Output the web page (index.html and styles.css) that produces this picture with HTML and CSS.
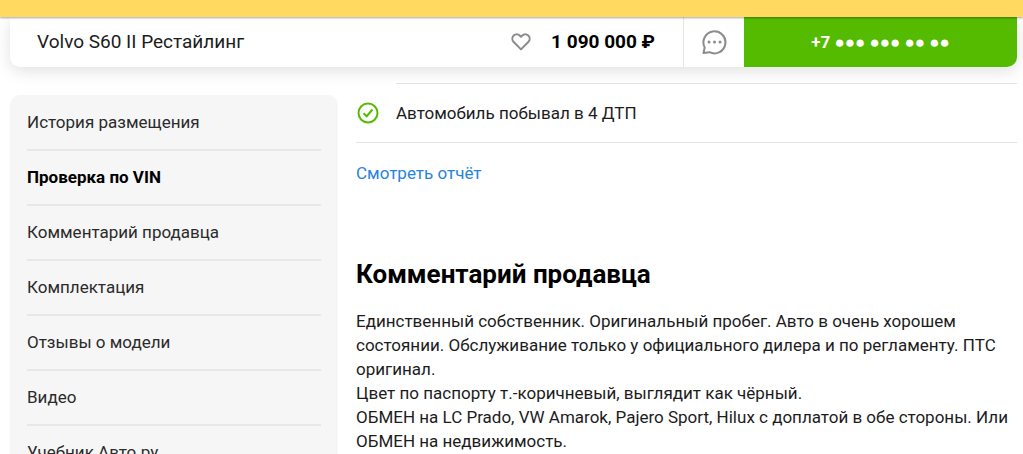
FILE: index.html
```
<!DOCTYPE html>
<html lang="ru">
<head>
  <meta charset="UTF-8">
  <title>Volvo S60 II Рестайлинг</title>
  <link rel="stylesheet" href="styles.css">
</head>
<body>
  <div class="top-strip"></div>

  <header class="sticky-bar">
    <div class="car-name">Volvo S60 II Рестайлинг</div>
    <button class="icon-btn like-btn" type="button" aria-label="В избранное">
      <svg width="20" height="18" viewBox="0 0 20 18" fill="none" stroke="#8c8c8c" stroke-width="2" stroke-linejoin="round">
        <path d="M10 16.400 2.700 9C.9 7.100.9 4.300 2.700 2.500 4.400.8 7 .8 8.700 2.500L10 3.800l1.300-1.300c1.700-1.700 4.300-1.700 6 0 1.800 1.800 1.800 4.600 0 6.500z"/>
      </svg>
    </button>
    <div class="price">1 090 000 ₽</div>
    <button class="icon-btn chat-btn" type="button" aria-label="Написать">
      <svg width="26" height="26" viewBox="0 0 26 26" fill="none" stroke="#8c8c8c" stroke-width="2" stroke-linejoin="round">
        <path d="M2.500 24l1.200-5.500A11 11 0 1 1 8.500 23.200z"/>
        <g fill="#8c8c8c" stroke="none">
          <circle cx="8" cy="13" r="1.500"/>
          <circle cx="13.500" cy="13" r="1.500"/>
          <circle cx="19" cy="13" r="1.500"/>
        </g>
      </svg>
    </button>
    <button class="phone-btn" type="button">+7 ●●● ●●● ●● ●●</button>
  </header>

  <div class="page">
    <nav class="side-menu">
      <ul>
        <li><a href="#history">История размещения</a></li>
        <li><a class="active" href="#vin">Проверка по VIN</a></li>
        <li><a href="#comment">Комментарий продавца</a></li>
        <li><a href="#options">Комплектация</a></li>
        <li><a href="#reviews">Отзывы о модели</a></li>
        <li><a href="#video">Видео</a></li>
        <li><a href="#manual">Учебник Авто.ру</a></li>
      </ul>
    </nav>

    <main class="content">
      <section class="report" id="vin">
        <div class="report-row">
          <svg class="check" width="24" height="24" viewBox="0 0 24 24" fill="none" stroke="#55bb00" stroke-width="2">
            <circle cx="12" cy="12" r="9.500"/>
            <path d="M7.500 12.200l3.200 3 5.800-6.700"/>
          </svg>
          <span>Автомобиль побывал в 4 ДТП</span>
        </div>
        <a class="report-link" href="#report">Смотреть отчёт</a>
      </section>

      <section id="comment">
        <h2>Комментарий продавца</h2>
        <p>
          Единственный собственник. Оригинальный пробег. Авто в очень хорошем состоянии. Обслуживание только у официального дилера и по регламенту. ПТС оригинал.<br>
          Цвет по паспорту т.-коричневый, выглядит как чёрный.<br>
          ОБМЕН на LC Prado, VW Amarok, Pajero Sport, Hilux с доплатой в обе стороны. Или ОБМЕН на недвижимость.
        </p>
      </section>
    </main>
  </div>
</body>
</html>
```

FILE: styles.css
```
* { box-sizing: border-box; }
body {
  margin: 0;
  height: 100vh;
  overflow: hidden;
  background: #fff;
  color: #1c1c1c;
  font-family: Roboto, "Liberation Sans", sans-serif;
  font-size: 17px;
  line-height: 24px;
}
a { text-decoration: none; }
button { border: 0; padding: 0; background: none; font-family: inherit; cursor: pointer; }

.top-strip {
  position: relative;
  z-index: 2;
  height: 17px;
  background: #ffd960;
  box-shadow: 0 1px 2px rgba(0, 0, 0, 0.35);
}

.sticky-bar {
  position: relative;
  display: flex;
  align-items: center;
  height: 50px;
  margin: 0 6px 0 10px;
  background: #fff;
  border-radius: 0 0 10px 10px;
  box-shadow: 0 4px 16px rgba(0, 0, 0, 0.12);
}
.car-name { flex: 1; padding-left: 27px; font-size: 19px; }
.icon-btn { display: flex; align-items: center; justify-content: center; }
.like-btn { width: 20px; margin-right: 20px; }
.price { margin-right: 28px; color: #000; font-size: 19px; font-weight: bold; }
.chat-btn { width: 61px; height: 100%; border-left: 1px solid #e6e6e6; }
.phone-btn {
  width: 273px;
  height: 100%;
  background: #55bb00;
  border-radius: 0 0 10px 0;
  color: #fff;
  font-size: 17px;
  font-weight: bold;
}

.page { display: flex; align-items: flex-start; gap: 18px; padding: 0 6px 0 10px; }

.side-menu {
  width: 328px;
  margin-top: 28px;
  padding: 1px 17px 0;
  background: #f6f6f6;
  border-radius: 10px;
}
.side-menu ul { margin: 0; padding: 0; list-style: none; }
.side-menu li { padding: 14px 0 15px; border-bottom: 2px solid #e8e8e8; }
.side-menu li:last-child { border-bottom: 0; }
.side-menu a { color: #2b2b2b; }
.side-menu a.active { color: #000; font-weight: bold; }

.content { flex: 1; padding-top: 16px; }
.report-row {
  display: grid;
  grid-template-columns: 24px 1fr;
  column-gap: 16px;
  align-items: center;
  padding-bottom: 17px;
  border-bottom: 1px solid #e3e3e3;
}
.report-row::before {
  content: "";
  grid-column: 2;
  margin-bottom: 17px;
  border-top: 1px solid #e3e3e3;
}
.check { grid-column: 1; }
.report-link { display: block; margin-top: 18px; color: #2683e0; }

h2 { margin: 72px 0 18px; color: #000; font-size: 26px; line-height: 34px; }
p { margin: 0; }
```
